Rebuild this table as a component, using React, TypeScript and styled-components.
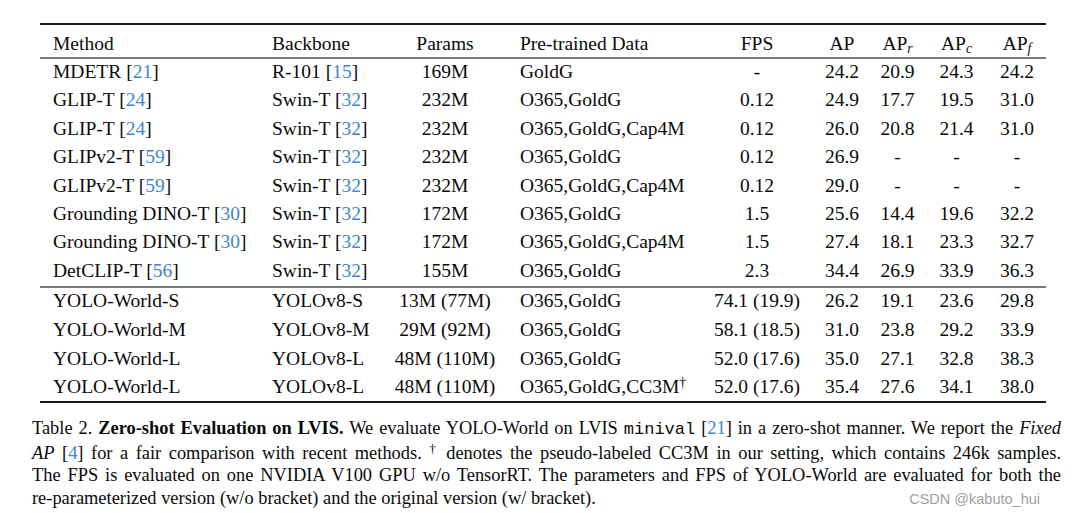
import React from 'react'
import styled, { createGlobalStyle } from 'styled-components'

const GlobalStyle = createGlobalStyle`
  html, body {
    margin: 0;
    padding: 0;
    background: #fff;
  }
  body {
    font-family: "Liberation Serif", "Times New Roman", serif;
    color: #111;
  }
`

type Row = {
  method: string
  mref?: string
  backbone: string
  bref?: string
  params: string
  data: string
  dagger?: boolean
  fps: string
  ap: string
  apr: string
  apc: string
  apf: string
}

const baseRows: Row[] = [
  { method: 'MDETR', mref: '21', backbone: 'R-101', bref: '15', params: '169M', data: 'GoldG', fps: '-', ap: '24.2', apr: '20.9', apc: '24.3', apf: '24.2' },
  { method: 'GLIP-T', mref: '24', backbone: 'Swin-T', bref: '32', params: '232M', data: 'O365,GoldG', fps: '0.12', ap: '24.9', apr: '17.7', apc: '19.5', apf: '31.0' },
  { method: 'GLIP-T', mref: '24', backbone: 'Swin-T', bref: '32', params: '232M', data: 'O365,GoldG,Cap4M', fps: '0.12', ap: '26.0', apr: '20.8', apc: '21.4', apf: '31.0' },
  { method: 'GLIPv2-T', mref: '59', backbone: 'Swin-T', bref: '32', params: '232M', data: 'O365,GoldG', fps: '0.12', ap: '26.9', apr: '-', apc: '-', apf: '-' },
  { method: 'GLIPv2-T', mref: '59', backbone: 'Swin-T', bref: '32', params: '232M', data: 'O365,GoldG,Cap4M', fps: '0.12', ap: '29.0', apr: '-', apc: '-', apf: '-' },
  { method: 'Grounding DINO-T', mref: '30', backbone: 'Swin-T', bref: '32', params: '172M', data: 'O365,GoldG', fps: '1.5', ap: '25.6', apr: '14.4', apc: '19.6', apf: '32.2' },
  { method: 'Grounding DINO-T', mref: '30', backbone: 'Swin-T', bref: '32', params: '172M', data: 'O365,GoldG,Cap4M', fps: '1.5', ap: '27.4', apr: '18.1', apc: '23.3', apf: '32.7' },
  { method: 'DetCLIP-T', mref: '56', backbone: 'Swin-T', bref: '32', params: '155M', data: 'O365,GoldG', fps: '2.3', ap: '34.4', apr: '26.9', apc: '33.9', apf: '36.3' },
]

const yoloRows: Row[] = [
  { method: 'YOLO-World-S', backbone: 'YOLOv8-S', params: '13M (77M)', data: 'O365,GoldG', fps: '74.1 (19.9)', ap: '26.2', apr: '19.1', apc: '23.6', apf: '29.8' },
  { method: 'YOLO-World-M', backbone: 'YOLOv8-M', params: '29M (92M)', data: 'O365,GoldG', fps: '58.1 (18.5)', ap: '31.0', apr: '23.8', apc: '29.2', apf: '33.9' },
  { method: 'YOLO-World-L', backbone: 'YOLOv8-L', params: '48M (110M)', data: 'O365,GoldG', fps: '52.0 (17.6)', ap: '35.0', apr: '27.1', apc: '32.8', apf: '38.3' },
  { method: 'YOLO-World-L', backbone: 'YOLOv8-L', params: '48M (110M)', data: 'O365,GoldG,CC3M', dagger: true, fps: '52.0 (17.6)', ap: '35.4', apr: '27.6', apc: '34.1', apf: '38.0' },
]

const colWidths = [219, 124, 124, 193, 114, 56, 55, 63, 58]

// [n] citation: brackets stay black, the number is the blue link
const Cite = ({ n }: { n: string }) => (
  <>[<Ref>{n}</Ref>]</>
)

type Kind = 'base' | 'baseLast' | 'yoloFirst' | 'yolo'

const App = () => {
  const renderRow = (r: Row, key: string, kind: Kind) => (
    <BodyRow key={key} $kind={kind}>
      <Cell $left>
        {r.method}
        {r.mref && <> <Cite n={r.mref} /></>}
      </Cell>
      <Cell $left>
        {r.backbone}
        {r.bref && <> <Cite n={r.bref} /></>}
      </Cell>
      <Cell>{r.params}</Cell>
      <Cell $left>
        {r.data}
        {r.dagger && <Sup>†</Sup>}
      </Cell>
      <Cell>{r.fps}</Cell>
      <Cell>{r.ap}</Cell>
      <Cell>{r.apr}</Cell>
      <Cell>{r.apc}</Cell>
      <Cell>{r.apf}</Cell>
    </BodyRow>
  )

  return (
    <Page>
      <GlobalStyle />
      <Table>
        <colgroup>
          {colWidths.map((w, i) => (
            <col key={i} style={{ width: w }} />
          ))}
        </colgroup>
        <thead>
          <HeadRow>
            <HeadCell $left>Method</HeadCell>
            <HeadCell $left>Backbone</HeadCell>
            <HeadCell>Params</HeadCell>
            <HeadCell $left>Pre-trained Data</HeadCell>
            <HeadCell>FPS</HeadCell>
            <HeadCell>AP</HeadCell>
            <HeadCell>AP<Sub>r</Sub></HeadCell>
            <HeadCell>AP<Sub>c</Sub></HeadCell>
            <HeadCell>AP<Sub>f</Sub></HeadCell>
          </HeadRow>
        </thead>
        <tbody>
          {baseRows.map((r, i) =>
            renderRow(r, 'b' + i, i === baseRows.length - 1 ? 'baseLast' : 'base')
          )}
          {yoloRows.map((r, i) => renderRow(r, 'y' + i, i === 0 ? 'yoloFirst' : 'yolo'))}
        </tbody>
      </Table>
      <Caption>
        <Line>
          Table 2. <b>Zero-shot Evaluation on LVIS.</b> We evaluate YOLO-World on LVIS <Mono>minival</Mono> <Cite n="21" /> in a zero-shot manner. We report the <i>Fixed</i>
        </Line>
        <Line>
          <i>AP</i> <Cite n="4" /> for a fair comparison with recent methods. <Sup>†</Sup> denotes the pseudo-labeled CC3M in our setting, which contains 246k samples.
        </Line>
        <Line>
          The FPS is evaluated on one NVIDIA V100 GPU w/o TensorRT. The parameters and FPS of YOLO-World are evaluated for both the
        </Line>
        <LastLine>
          <span>re-parameterized version (w/o bracket) and the original version (w/ bracket).</span>
          <Watermark>CSDN @kabuto_hui</Watermark>
        </LastLine>
      </Caption>
    </Page>
  )
}

export default App

const Page = styled.div`
  width: 1077px;
  height: 513px;
  padding-top: 23px;
  box-sizing: border-box;
  overflow: hidden;
`

const Table = styled.table`
  margin-left: 40px;
  width: 1006px;
  table-layout: fixed;
  border-collapse: collapse;
  border-top: 2px solid #1a1a1a;
  border-bottom: 2px solid #1a1a1a;
  font-size: 19.5px;
  line-height: 1;
  color: #0a0a0a;
`

const HeadRow = styled.tr`
  height: 34px;
  border-bottom: 2px solid #7a7a7a;
`

const rowHeights: Record<Kind, string> = {
  base: 'height: 28.4px;',
  baseLast: 'height: 30.4px; & > td { padding-bottom: 2px; }',
  yoloFirst: 'height: 28.6px; border-top: 2px solid #7a7a7a; & > td { padding-bottom: 2px; }',
  yolo: 'height: 28.8px;',
}

const BodyRow = styled.tr<{ $kind: Kind }>`
  ${p => rowHeights[p.$kind]}
`

const Cell = styled.td<{ $left?: boolean }>`
  padding-top: 0;
  padding-right: 0;
  padding-left: ${p => (p.$left ? '13px' : '0')};
  text-align: ${p => (p.$left ? 'left' : 'center')};
  white-space: nowrap;
  vertical-align: middle;
`

const HeadCell = styled.th<{ $left?: boolean }>`
  padding: 6px 0 0 ${p => (p.$left ? '13px' : '0')};
  text-align: ${p => (p.$left ? 'left' : 'center')};
  font-weight: normal;
  white-space: nowrap;
  vertical-align: middle;
`

const Ref = styled.span`
  color: #3f86cc;
`

const Sub = styled.sub`
  font-style: italic;
  font-size: 0.7em;
  vertical-align: -0.25em;
  line-height: 0;
`

const Sup = styled.sup`
  font-size: 0.7em;
  vertical-align: 0.45em;
  line-height: 0;
  color: #000;
`

const Caption = styled.div`
  margin: 14px 0 0 32px;
  width: 1029px;
  font-size: 18.4px;
  line-height: 22.5px;
  color: #0a0a0a;
`

const Line = styled.div`
  text-align: justify;
  text-align-last: justify;
  white-space: nowrap;
`

const LastLine = styled.div`
  display: flex;
  justify-content: space-between;
  align-items: baseline;
  white-space: nowrap;
`

const Mono = styled.span`
  font-family: "Liberation Mono", "Courier New", monospace;
  font-size: 17px;
`

const Watermark = styled.span`
  font-family: "Liberation Sans", Arial, sans-serif;
  font-size: 14.5px;
  color: #a0a0a0;
  margin-right: 21px;
`
